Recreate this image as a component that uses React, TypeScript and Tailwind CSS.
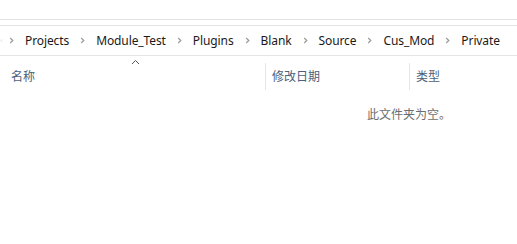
import React from 'react';

const crumbs = ['Projects', 'Module_Test', 'Plugins', 'Blank', 'Source', 'Cus_Mod', 'Private'];

const Chevron = () => (
  <svg width="5" height="7" viewBox="0 0 5 7" className="shrink-0">
    <path d="M1.2 1 L3.8 3.5 L1.2 6" fill="none" stroke="#9a9a9a" strokeWidth="1.2" />
  </svg>
);

export default function App() {
  return (
    <div className="w-[517px] h-[244px] bg-white overflow-hidden" style={{ fontFamily: '"Noto Sans", "Noto Sans CJK SC", sans-serif' }}>
      {/* top strip */}
      <div className="h-[19px]" />
      <div className="h-px bg-[#e3e3e3]" />
      <div className="h-[5px]" />
      <div className="h-px bg-[#e3e3e3]" />

      {/* breadcrumb bar */}
      <div className="h-[29px] flex items-center text-[12px] text-[#1a1a1a] tracking-[-0.1px]">
        <span className="w-[3px] overflow-hidden flex">
          <svg width="6" height="7" viewBox="0 0 6 7"><path d="M4.5 1 L1.5 3.5 L4.5 6" fill="none" stroke="#d0d0d0" strokeWidth="1.2" /></svg>
        </span>
        {crumbs.map((c) => (
          <React.Fragment key={c}>
            <span className="w-[17px] flex justify-center items-center">
              <Chevron />
            </span>
            <span className="px-[5px] whitespace-nowrap">{c}</span>
          </React.Fragment>
        ))}
      </div>
      <div className="h-px bg-[#e5e5e5]" />

      {/* column headers */}
      <div className="relative h-[36px] flex text-[12px] text-[#4c607a]">
        <span className="absolute left-[131px] top-[3px]">
          <svg width="9" height="6" viewBox="0 0 9 6"><path d="M1 5 L4.5 1.5 L8 5" fill="none" stroke="#555" strokeWidth="1" /></svg>
        </span>
        <div className="w-[265px] pl-[11px] flex items-center pt-[5px]">名称</div>
        <div className="w-[144px] flex items-center pt-[5px]">
          <div className="w-px h-[27px] bg-[#e5e5e5]" />
          <span className="pl-[6px]">修改日期</span>
        </div>
        <div className="flex-1 flex items-center pt-[5px]">
          <div className="w-px h-[27px] bg-[#e5e5e5]" />
          <span className="pl-[6px]">类型</span>
        </div>
      </div>

      {/* empty message */}
      <div className="pl-[367px] pt-[14px] text-[12px] text-[#6d6d6d]">此文件夹为空。</div>
    </div>
  );
}
